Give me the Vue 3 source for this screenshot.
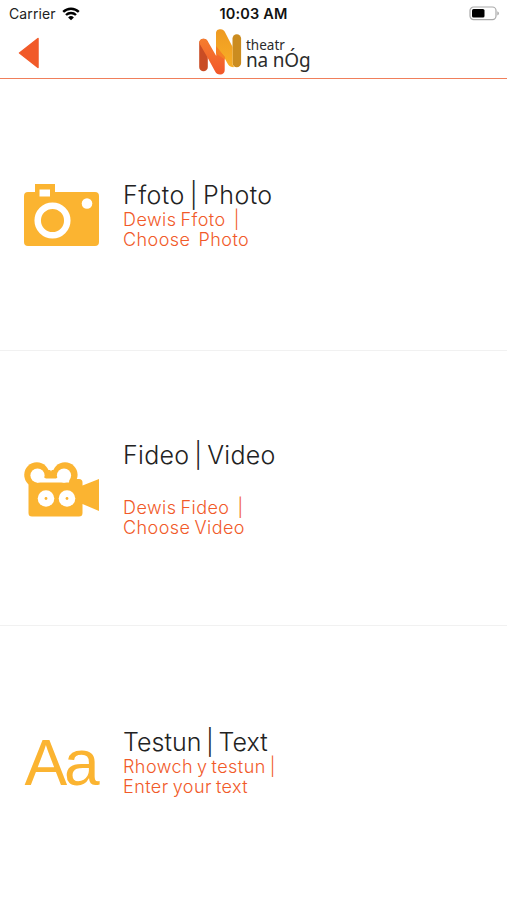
<template>
  <div class="screen">
    <header class="header">
      <div class="status-bar">
        <div class="carrier">
          <span>Carrier</span>
          <svg class="wifi" viewBox="0 0 18 14" width="18" height="14">
            <path d="M1.2 4.9a11.2 11.2 0 0 1 15.6 0" />
            <path d="M4 8a7.2 7.2 0 0 1 10 0" />
            <path class="dot" d="M9 13.3 6.1 10.4a4.2 4.2 0 0 1 5.8 0z" />
          </svg>
        </div>
        <span class="time">10:03 AM</span>
        <svg class="battery" viewBox="0 0 32 15" width="32" height="15">
          <rect class="shell" x="1" y="1" width="26" height="12.6" rx="3.6" />
          <rect x="3" y="3" width="12.5" height="8.6" rx="1.6" />
          <path class="cap" d="M28.3 5.2c2.2.8 2.2 3.4 0 4.2z" />
        </svg>
      </div>
      <div class="nav-bar">
        <svg class="back" viewBox="0 0 22 32" width="22" height="32">
          <path d="M20 1.5v29L1.5 16z" />
        </svg>
        <div class="logo">
          <svg viewBox="0 0 44 46" width="44" height="46">
            <defs>
              <linearGradient id="orange" x1="0" y1="0" x2="0" y2="1">
                <stop offset="0" stop-color="#f57d2e" />
                <stop offset="1" stop-color="#f2562a" />
              </linearGradient>
              <linearGradient id="yellow" x1="0" y1="0" x2="0" y2="1">
                <stop offset="0" stop-color="#ee9a22" />
                <stop offset="1" stop-color="#f9af25" />
              </linearGradient>
            </defs>
            <path class="bar" d="M38.8 9.5V34" stroke="#cb8c20" />
            <path class="bar" d="M5.5 14v24" stroke="#c94c24" />
            <path
              fill="url(#yellow)"
              d="M18 4.5C18 1 20 .2 22.500.2c2.500 0 3.800 1.300 4.800 3.600L34.600 18v16.500c0 1.800.8 2.900 2 3.600-4 .6-6-1.300-7.200-3.800L26.500 29 18 24z"
            />
            <path
              fill="url(#orange)"
              d="M1.200 14C1.200 11 3 9.800 5.500 9.800c2.500 0 3.700 1.200 4.700 3.200L18.200 27V18l8.500 10v13.300c0 2.500-1.800 4.200-4.500 4.200s-4-1-5.200-3.200L9.800 29 1.200 14z"
            />
            <path fill="#f58023" d="M18.100 17 26.800 28v2.500l-8.700-6z" />
          </svg>
          <div class="logo-text">
            <span class="logo-small">theatr</span>
            <span class="logo-big">na nÓg</span>
          </div>
        </div>
      </div>
    </header>

    <main class="list">
      <section
        v-for="item in items"
        :key="item.type"
        class="row"
        :class="item.type"
      >
        <div class="icon">
          <svg
            v-if="item.type === 'photo'"
            viewBox="0 0 75 62"
            width="75"
            height="62"
          >
            <path
              fill-rule="evenodd"
              d="M4 8h7V0h20v8h40a4 4 0 0 1 4 4v46a4 4 0 0 1-4 4H4a4 4 0 0 1-4-4V12a4 4 0 0 1 4-4zM15.5 5.5v7H26v-7z"
            />
            <circle class="ring" cx="28.5" cy="36.5" r="14.8" />
            <circle class="hole" cx="63" cy="19.5" r="5.3" />
          </svg>
          <svg
            v-else-if="item.type === 'video'"
            viewBox="0 0 75 55"
            width="75"
            height="55"
          >
            <circle cx="12.8" cy="12.8" r="12.6" />
            <circle cx="41" cy="12.8" r="12.6" />
            <path
              d="M4.500 17H20V8h14v9h21a3.500 3.500 0 0 1 3.500 3.500v3L75 17v32l-16.500-7v9a3.500 3.500 0 0 1-3.500 3.500H8A3.500 3.500 0 0 1 4.500 51z"
            />
            <path class="hole" d="M22.300 0 27 9.500 31.700 0z" />
            <circle class="hole" cx="13.5" cy="13.6" r="7.1" />
            <circle class="hole" cx="40" cy="13.6" r="7.1" />
            <path
              class="hole"
              d="M12.500 20.500 20 15.500l2 1h10l1.500-1 12 1-.5 4z"
            />
            <circle class="hole" cx="22" cy="36.5" r="8.3" />
            <circle class="hole" cx="43" cy="36.5" r="8.3" />
            <circle cx="22" cy="36.5" r="1.4" />
            <circle cx="43" cy="36.5" r="1.4" />
          </svg>
          <span v-else class="letters">Aa</span>
        </div>
        <div class="content">
          <h2>{{ item.title }}</h2>
          <p class="first">{{ item.first }}</p>
          <p class="second">{{ item.second }}</p>
        </div>
      </section>
    </main>
  </div>
</template>

<script setup>
  const items = [
    {
      type: 'photo',
      title: 'Ffoto | Photo',
      first: 'Dewis Ffoto  |',
      second: 'Choose  Photo'
    },
    {
      type: 'video',
      title: 'Fideo | Video',
      first: 'Dewis Fideo  |',
      second: 'Choose Video'
    },
    {
      type: 'text',
      title: 'Testun | Text',
      first: 'Rhowch y testun |',
      second: 'Enter your text'
    }
  ]
</script>

<style>
  body {
    margin: 0;
    background: #fff;
  }
</style>

<style scoped>
  .screen {
    display: flex;
    flex-direction: column;
    width: 100%;
    height: 900px;
    overflow: hidden;
    background: #fff;
    font-family: Inter, 'Liberation Sans', sans-serif;
  }

  .header {
    box-sizing: border-box;
    height: 79px;
    border-bottom: 1.5px solid #f07f5b;
  }

  .status-bar {
    display: grid;
    grid-template-columns: 1fr auto 1fr;
    align-items: center;
    height: 27px;
    padding: 0 6px 0 9px;
    font-size: 14px;
    color: #222;
  }

  .carrier {
    display: flex;
    align-items: center;
    gap: 6px;
    letter-spacing: 0.1px;
  }

  .wifi {
    fill: none;
    stroke: #000;
    stroke-width: 2.4;
  }

  .wifi .dot {
    fill: #000;
    stroke: none;
  }

  .time {
    margin-right: 3px;
    font-size: 14.5px;
    font-weight: 600;
    letter-spacing: 0.15px;
    color: #111;
  }

  .battery {
    justify-self: end;
  }

  .battery .shell {
    fill: none;
    stroke: #aaa;
    stroke-width: 1.2;
  }

  .battery .cap {
    fill: #aaa;
  }

  .nav-bar {
    display: flex;
    align-items: flex-start;
    padding-left: 18px;
  }

  .back {
    margin-top: 10px;
    fill: #f15a29;
    stroke: #f15a29;
    stroke-width: 1.5;
    stroke-linejoin: round;
  }

  .logo {
    display: flex;
    margin: 2px 0 0 158px;
  }

  .logo .bar {
    fill: none;
    stroke-width: 8.6;
    stroke-linecap: round;
  }

  .logo-text {
    display: flex;
    flex-direction: column;
    margin: 9px 0 0 4px;
    font-family: 'Noto Sans', sans-serif;
    color: #2b2b2b;
    white-space: nowrap;
  }

  .logo-small {
    font-size: 13.5px;
    line-height: 15px;
  }

  .logo-big {
    font-size: 19px;
    line-height: 15px;
    letter-spacing: -0.2px;
  }

  .list {
    display: grid;
    grid-template-rows: 272px 275px 274px;
  }

  .row {
    box-sizing: border-box;
    display: flex;
    align-items: flex-start;
    padding-left: 24.4px;
    border-bottom: 1px solid #f1f1f1;
  }

  .row:last-child {
    border-bottom: 0;
  }

  .icon {
    width: 75px;
    margin-right: 23.6px;
    fill: #fbb431;
  }

  .icon svg {
    display: block;
  }

  .photo .icon {
    margin-top: 105px;
  }

  .video .icon {
    margin-top: 111px;
  }

  .text .icon {
    margin-top: 105px;
  }

  .ring {
    fill: none;
    stroke: #fff;
    stroke-width: 6.5;
  }

  .hole {
    fill: #fff;
  }

  .letters {
    display: block;
    font-family: 'Liberation Sans', sans-serif;
    font-size: 64px;
    line-height: 64px;
    letter-spacing: -3px;
    color: #fbb431;
  }

  .content {
    white-space: pre;
  }

  .photo .content {
    margin-top: 101px;
  }

  .video .content {
    margin-top: 89px;
  }

  .text .content {
    margin-top: 101px;
  }

  h2 {
    margin: 0;
    font-size: 25px;
    font-weight: 300;
    line-height: 30px;
    letter-spacing: 0.45px;
    word-spacing: -2.5px;
    color: #222;
  }

  .video h2 {
    letter-spacing: 0.3px;
  }

  .text h2 {
    letter-spacing: 0.05px;
  }

  p {
    margin: 0;
    font-size: 18px;
    font-weight: 300;
    line-height: 20px;
    letter-spacing: 0.45px;
    word-spacing: -1.5px;
    color: #f15a29;
  }

  .video .content .first {
    margin-top: 28px;
  }
</style>
